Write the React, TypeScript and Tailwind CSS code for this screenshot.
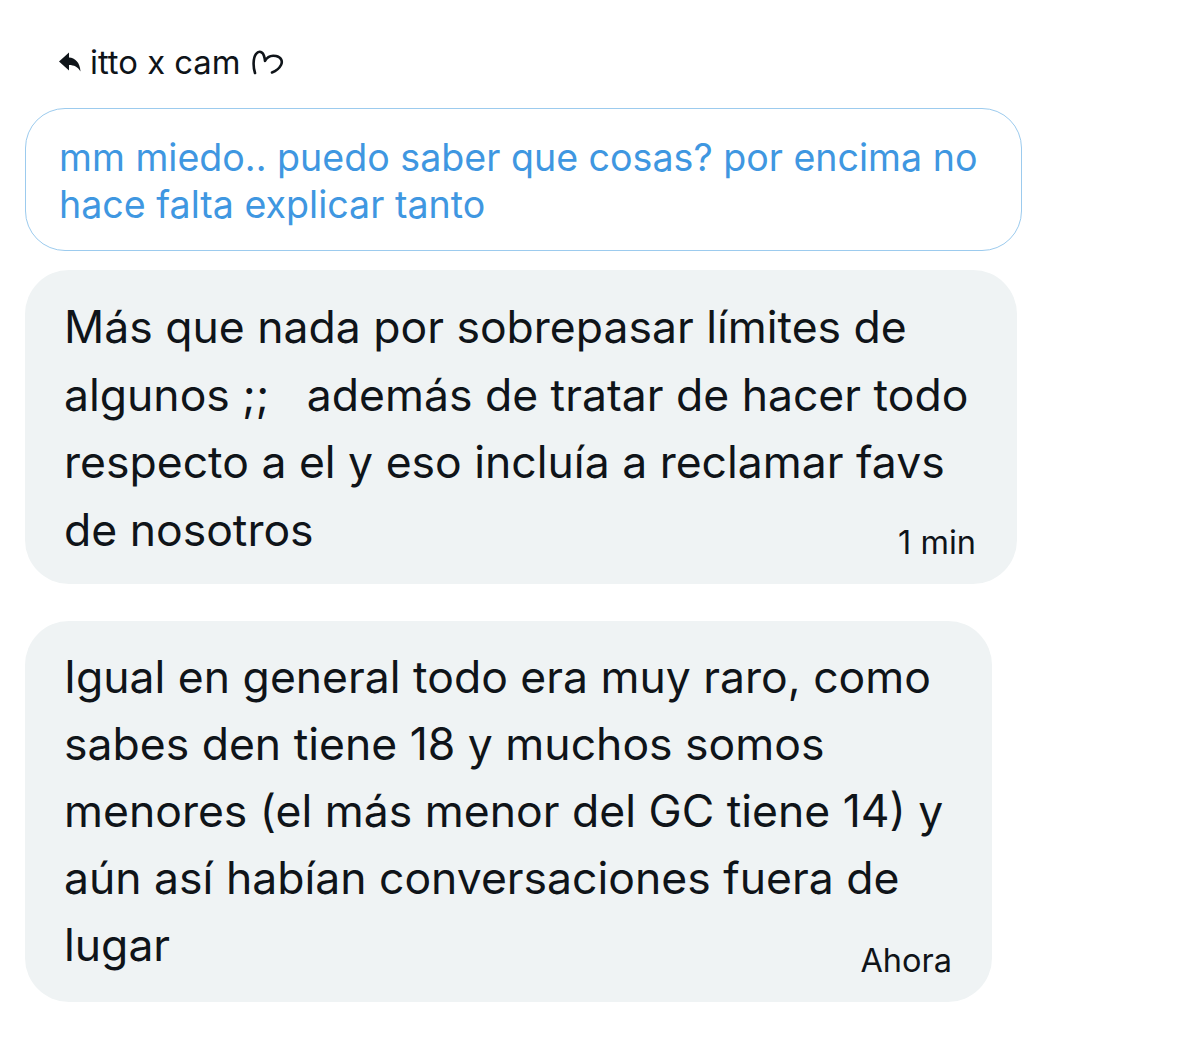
import React from "react";

const font = { fontFamily: "Inter, 'Noto Sans', sans-serif" };

function ReplyArrow() {
  return (
    <svg width="22" height="20" viewBox="0 0 22 20" className="mr-[9px]">
      <path
        d="M0 9.5 L10 0.5 L10 5.5 C16 6 21 10 21.5 19.5 C19 15 15 13 10 13 L10 18.5 Z"
        fill="#0f1419"
      />
    </svg>
  );
}

function HeartGlyph() {
  return (
    <svg width="32" height="26" viewBox="0 0 32 26" className="ml-[11px]">
      <path
        d="M3 24 C1 18 1 9 4 5 C7 1 11 3 12 7 C13 10 13 12 13 12 C15 8 19 6 24 7 C29 8 31 12 29 16 C27 20 24 22 20 23.5"
        fill="none"
        stroke="#0f1419"
        strokeWidth="2.6"
        strokeLinecap="round"
        strokeLinejoin="round"
      />
    </svg>
  );
}

export default function App() {
  return (
    <div className="w-[1200px] h-[1046px] bg-white text-[#0f1419]" style={font}>
      <div className="pt-[42px] pl-[59px] flex items-center h-[82px]">
        <div className="flex items-center">
          <ReplyArrow />
          <span className="text-[32.8px] leading-[40px] text-[#0f1419]">itto x cam</span>
          <HeartGlyph />
        </div>
      </div>

      <div className="ml-[25px] mt-[26px] w-[997px] h-[143px] rounded-[40px] border-[1.5px] border-[#9ccbee] pl-[33px] pt-[25px]">
        <div className="text-[37.6px] leading-[47px] text-[#3f97e1] whitespace-nowrap">
          mm miedo.. puedo saber que cosas? por encima no
          <br />
          hace falta explicar tanto
        </div>
      </div>

      <div className="ml-[25px] mt-[19px] w-[992px] h-[314px] rounded-[44px] bg-[#eff3f4] pl-[39px] pr-[41px] pt-[24px] relative">
        <div className="text-[44.5px] leading-[67.5px] whitespace-nowrap">
          Más que nada por sobrepasar límites de
          <br />
          algunos ;;&nbsp;&nbsp; además de tratar de hacer todo
          <br />
          respecto a el y eso incluía a reclamar favs
          <br />
          de nosotros
        </div>
        <span className="absolute right-[41px] bottom-[24px] text-[32.5px] leading-[34px]">1 min</span>
      </div>

      <div className="ml-[25px] mt-[37px] w-[967px] h-[381px] rounded-[44px] bg-[#eff3f4] pl-[39px] pt-[23px] relative">
        <div className="text-[44.5px] leading-[67px] whitespace-nowrap">
          Igual en general todo era muy raro, como
          <br />
          sabes den tiene 18 y muchos somos
          <br />
          menores (el más menor del GC tiene 14) y
          <br />
          aún así habían conversaciones fuera de
          <br />
          lugar
        </div>
        <span className="absolute right-[40px] bottom-[24px] text-[32.5px] leading-[34px]">Ahora</span>
      </div>
    </div>
  );
}
